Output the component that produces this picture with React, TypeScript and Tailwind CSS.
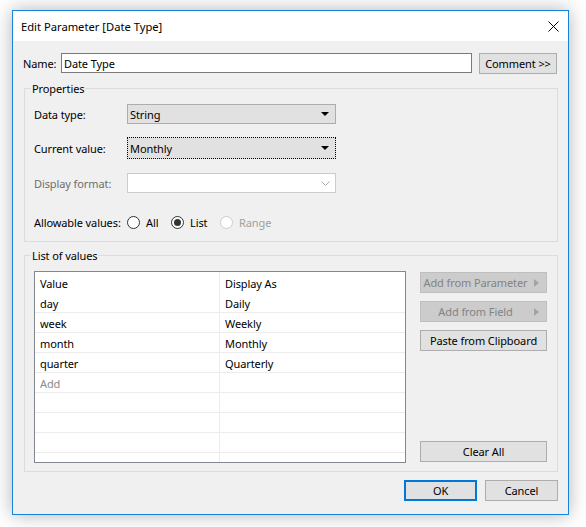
import type { ReactNode } from "react";

const Button = ({
  children,
  className = "",
  disabled = false,
  arrow = false,
}: {
  children: ReactNode;
  className?: string;
  disabled?: boolean;
  arrow?: boolean;
}) => (
  <div
    className={`relative flex h-[21px] items-center justify-center whitespace-nowrap border pt-[2px] ${
      disabled ? "border-[#bfbfbf] bg-[#cccccc] text-[#838383]" : "border-[#adadad] bg-[#e1e1e1] text-black"
    } ${arrow ? "pr-[16px]" : ""} ${className}`}
  >
    {children}
    {arrow && (
      <svg className="absolute right-[6px] top-[6px]" width="6" height="8" viewBox="0 0 6 8">
        <path d="M0 0L5 4L0 8Z" fill="#a3a3a3" />
      </svg>
    )}
  </div>
);

const Arrow = () => (
  <svg width="8" height="4" viewBox="0 0 8 4">
    <path d="M0 0H8L4 4Z" fill="#000" />
  </svg>
);

const Radio = ({ label, checked = false, disabled = false, className = "" }: { label: string; checked?: boolean; disabled?: boolean; className?: string }) => (
  <div className={`flex items-center ${className}`}>
    <span
      className={`flex h-[13px] w-[13px] items-center justify-center rounded-full border bg-white ${
        disabled ? "border-[#cccccc]" : "border-[#333333]"
      }`}
    >
      {checked && <span className="h-[7px] w-[7px] rounded-full bg-[#333333]" />}
    </span>
    <span className={`ml-[6px] pt-[3px] ${disabled ? "text-[#a0a0a0]" : ""}`}>{label}</span>
  </div>
);

const rows = [
  ["day", "Daily"],
  ["week", "Weekly"],
  ["month", "Monthly"],
  ["quarter", "Quarterly"],
  ["Add", ""],
  ["", ""],
  ["", ""],
  ["", ""],
  ["", ""],
];

export default function App() {
  return (
    <div className="min-h-screen bg-white pl-[12px] pt-[10px] font-['Noto_Sans',sans-serif] text-[11px] tracking-[-0.1px] text-black">
      <div className="flex h-[505px] w-[557px] flex-col border border-[#1883d7] bg-[#f0f0f0] shadow-[0_0_18px_rgba(0,0,0,0.3)]">
        {/* title bar */}
        <div className="flex h-[30px] items-center justify-between bg-white pl-[8px] pr-[9px]">
          <span className="pt-[2px] text-[11.2px] tracking-normal">Edit Parameter [Date Type]</span>
          <svg width="11" height="11" viewBox="0 0 11 11">
            <path d="M0.5 0.5L10.5 10.5M10.5 0.5L0.5 10.5" stroke="#000" strokeWidth="1" />
          </svg>
        </div>

        <div className="flex flex-1 flex-col px-[10px]">
          <div className="mt-[12px] flex h-[20px] items-center">
            <span className="w-[38px] pt-[3px]">Name:</span>
            <div className="flex h-[20px] w-[411px] items-center border border-[#7a7a7a] bg-white pl-[2px] pt-[2px]">Date Type</div>
            <Button className="ml-[7px] h-[20px] w-[78px]">Comment &gt;&gt;</Button>
          </div>

          <fieldset className="ml-[1px] mt-[7px] w-[534px] border border-[#dcdcdc] px-[9px] pb-[9px]">
            <legend className="ml-[-3px] px-[1px] leading-[17px]">Properties</legend>
            <div className="mt-[7px] flex h-[20px] items-center">
              <span className="w-[93px] pt-[3px]">Data type:</span>
              <div className="flex h-[20px] w-[209px] items-center justify-between border border-[#adadad] bg-[#e1e1e1] pl-[2px] pr-[6px]">
                <span className="pt-[3px]">String</span>
                <Arrow />
              </div>
            </div>
            <div className="mt-[13px] flex h-[22px] items-center">
              <span className="w-[93px] pt-[3px]">Current value:</span>
              <div className="flex h-[22px] w-[209px] items-center justify-between border border-dotted border-black bg-[#e1e1e1] pl-[2px] pr-[6px]">
                <span className="pt-[3px]">Monthly</span>
                <Arrow />
              </div>
            </div>
            <div className="mt-[14px] flex h-[20px] items-center">
              <span className="w-[93px] pt-[3px] text-[#6d6d6d]">Display format:</span>
              <div className="flex h-[20px] w-[209px] items-center justify-end border border-[#cccccc] bg-white pr-[5px]">
                <svg width="9" height="5" viewBox="0 0 9 5">
                  <path d="M0.5 0.5L4.5 4.5L8.5 0.5" stroke="#a8a8a8" strokeWidth="1" fill="none" />
                </svg>
              </div>
            </div>
            <div className="mt-[19px] flex h-[20px] items-center">
              <span className="w-[93px] whitespace-nowrap pt-[3px]">Allowable values:</span>
              <Radio label="All" className="w-[44px]" />
              <Radio label="List" checked className="w-[49px]" />
              <Radio label="Range" disabled />
            </div>
          </fieldset>

          <fieldset className="ml-[1px] mt-[5px] w-[534px] border border-[#dcdcdc] px-[9px] pb-[8px]">
            <legend className="ml-[-3px] px-[1px] leading-[17px]">List of values</legend>
            <div className="mt-[7px] flex">
              <div className="h-[192px] w-[372px] overflow-hidden border border-[#828790] bg-white">
                <div className="flex h-[21px]">
                  <div className="flex w-[185px] items-center border-r border-[#ececec] pl-[5px] pt-[3px]">Value</div>
                  <div className="flex items-center pl-[5px] pt-[3px]">Display As</div>
                </div>
                {rows.map(([v, d], i) => (
                  <div key={i} className="flex h-[20px] shrink-0 border-b border-[#ececec]">
                    <div
                      className={`flex w-[185px] items-center border-r border-[#ececec] pl-[5px] pt-[3px] ${
                        v === "Add" ? "text-[#8a8a8a]" : ""
                      }`}
                    >
                      {v}
                    </div>
                    <div className="flex items-center pl-[5px] pt-[3px]">{d}</div>
                  </div>
                ))}
              </div>
              <div className="ml-[14px] flex w-[127px] flex-col">
                <Button disabled arrow className="mt-[1px]">
                  Add from Parameter
                </Button>
                <Button disabled arrow className="mt-[8px]">
                  Add from Field
                </Button>
                <Button className="mt-[8px]">Paste from Clipboard</Button>
                <Button className="mb-[1px] mt-auto">Clear All</Button>
              </div>
            </div>
          </fieldset>

          <div className="mt-[8px] flex justify-end">
            <div className="flex h-[21px] w-[73px] items-center justify-center border-2 border-[#0078d7] bg-[#e1e1e1] pt-[2px]">OK</div>
            <Button className="ml-[8px] w-[73px]">Cancel</Button>
          </div>
        </div>
      </div>
    </div>
  );
}
